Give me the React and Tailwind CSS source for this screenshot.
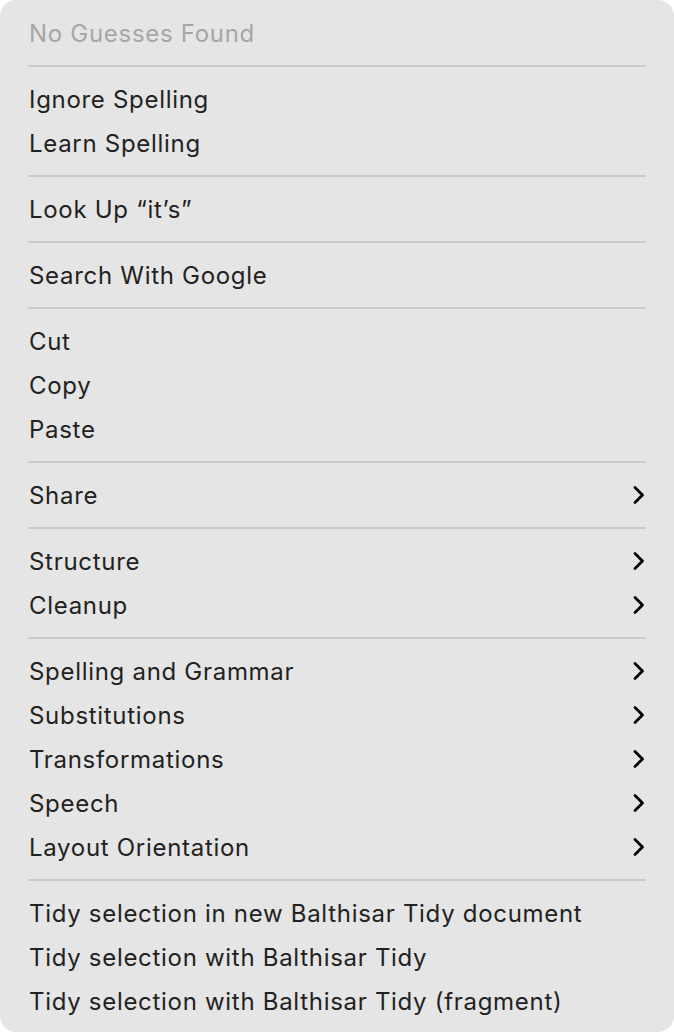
const groups = [
  [{ label: 'No Guesses Found', disabled: true }],
  [{ label: 'Ignore Spelling' }, { label: 'Learn Spelling' }],
  [{ label: 'Look Up \u201cit\u2019s\u201d' }],
  [{ label: 'Search With Google' }],
  [{ label: 'Cut' }, { label: 'Copy' }, { label: 'Paste' }],
  [{ label: 'Share', sub: true }],
  [{ label: 'Structure', sub: true }, { label: 'Cleanup', sub: true }],
  [
    { label: 'Spelling and Grammar', sub: true },
    { label: 'Substitutions', sub: true },
    { label: 'Transformations', sub: true },
    { label: 'Speech', sub: true },
    { label: 'Layout Orientation', sub: true },
  ],
  [
    { label: 'Tidy selection in new Balthisar Tidy document' },
    { label: 'Tidy selection with Balthisar Tidy' },
    { label: 'Tidy selection with Balthisar Tidy (fragment)' },
  ],
];

const Chevron = () => (
  <svg width="12" height="20" viewBox="0 0 12 20" fill="none" className="shrink-0">
    <path d="M2 2.5 L9.5 10 L2 17.5" stroke="#000" strokeWidth="2.8" strokeLinecap="round" strokeLinejoin="round" />
  </svg>
);

const MenuItem = ({ item }) => (
  <div className="flex h-[44px] items-center justify-between pl-[29px] pr-[29px]">
    <span className={`pt-[2px] ${item.disabled ? 'text-[#a6a6a6]' : 'text-[#222222]'}`}>{item.label}</span>
    {item.sub && <Chevron />}
  </div>
);

export default function App() {
  return (
    <div className="h-[1032px] w-[674px] bg-white">
      <div
        className="flex h-full w-full flex-col rounded-[16px] bg-[#e5e5e5] pt-[11px] pb-[9px] text-[24px] leading-none tracking-[0.7px]"
        style={{ fontFamily: 'Inter, "Noto Sans", sans-serif' }}
      >
        {groups.map((group, gi) => (
          <div key={gi}>
            {gi > 0 && (
              <div className="flex h-[22px] items-center px-[28px]">
                <div className="h-[2px] w-full bg-[#cacaca]" />
              </div>
            )}
            {group.map((item) => (
              <MenuItem key={item.label} item={item} />
            ))}
          </div>
        ))}
      </div>
    </div>
  );
}
